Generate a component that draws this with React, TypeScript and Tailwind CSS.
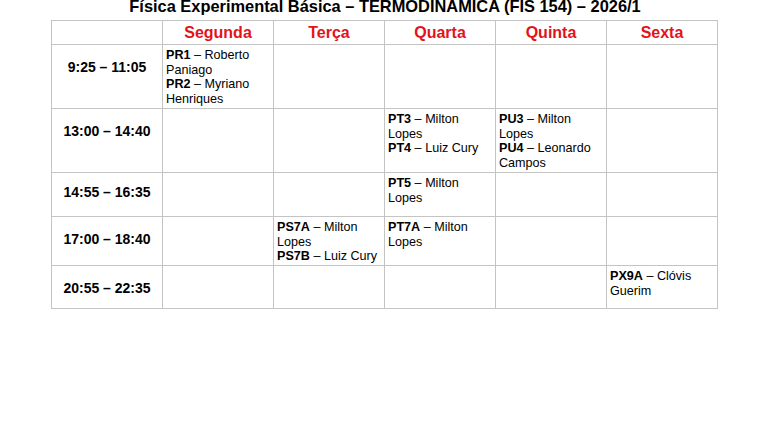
import React from "react";

type Entry = { code: string; name: string };

const days = ["Segunda", "Terça", "Quarta", "Quinta", "Sexta"];

const rows: { time: string; h: string; tp: string; cells: Entry[][] }[] = [
  {
    time: "9:25 – 11:05",
    h: "h-[64px]",
    tp: "pt-[14px]",
    cells: [
      [
        { code: "PR1", name: "Roberto Paniago" },
        { code: "PR2", name: "Myriano Henriques" },
      ],
      [],
      [],
      [],
      [],
    ],
  },
  {
    time: "13:00 – 14:40",
    h: "h-[64px]",
    tp: "pt-[14px]",
    cells: [
      [],
      [],
      [
        { code: "PT3", name: "Milton Lopes" },
        { code: "PT4", name: "Luiz Cury" },
      ],
      [
        { code: "PU3", name: "Milton Lopes" },
        { code: "PU4", name: "Leonardo Campos" },
      ],
      [],
    ],
  },
  {
    time: "14:55 – 16:35",
    h: "h-[44px]",
    tp: "pt-[11px]",
    cells: [[], [], [{ code: "PT5", name: "Milton Lopes" }], [], []],
  },
  {
    time: "17:00 – 18:40",
    h: "h-[49px]",
    tp: "pt-[14px]",
    cells: [
      [],
      [
        { code: "PS7A", name: "Milton Lopes" },
        { code: "PS7B", name: "Luiz Cury" },
      ],
      [{ code: "PT7A", name: "Milton Lopes" }],
      [],
      [],
    ],
  },
  {
    time: "20:55 – 22:35",
    h: "h-[43px]",
    tp: "pt-[14px]",
    cells: [[], [], [], [], [{ code: "PX9A", name: "Clóvis Guerim" }]],
  },
];

export default function App() {
  return (
    <div
      className="w-[770px] h-[433px] bg-white text-black overflow-hidden"
      style={{ fontFamily: '"Liberation Sans", Arial, sans-serif' }}
    >
      <div className="h-[20px] text-center font-bold text-[16.4px] leading-[13px]">
        Física Experimental Básica – TERMODINAMICA (FIS 154) – 2026/1
      </div>
      <div className="ml-[51px] w-[667px] grid grid-cols-[112px_111px_111px_111px_111px_111px] border-t border-[#c4c4c4]">
        <div className="h-[24px] border-l border-r border-b border-[#c4c4c4]" />
        {days.map((d) => (
          <div
            key={d}
            className="h-[24px] border-r border-b border-[#c4c4c4] flex items-center justify-center font-bold text-[16px] leading-[18px] text-[#e3131b]"
          >
            {d}
          </div>
        ))}
        {rows.map((r) => (
          <React.Fragment key={r.time}>
            <div
              className={`${r.h} ${r.tp} border-l border-r border-b border-[#c4c4c4] text-center font-bold text-[14px] leading-[16px]`}
            >
              {r.time}
            </div>
            {r.cells.map((c, i) => (
              <div
                key={i}
                className={`${r.h} border-r border-b border-[#c4c4c4] px-[3px] pt-[3px] text-[12.6px] leading-[14.6px]`}
              >
                {c.map((e) => (
                  <div key={e.code}>
                    <span className="font-bold">{e.code}</span> – {e.name}
                  </div>
                ))}
              </div>
            ))}
          </React.Fragment>
        ))}
      </div>
    </div>
  );
}
